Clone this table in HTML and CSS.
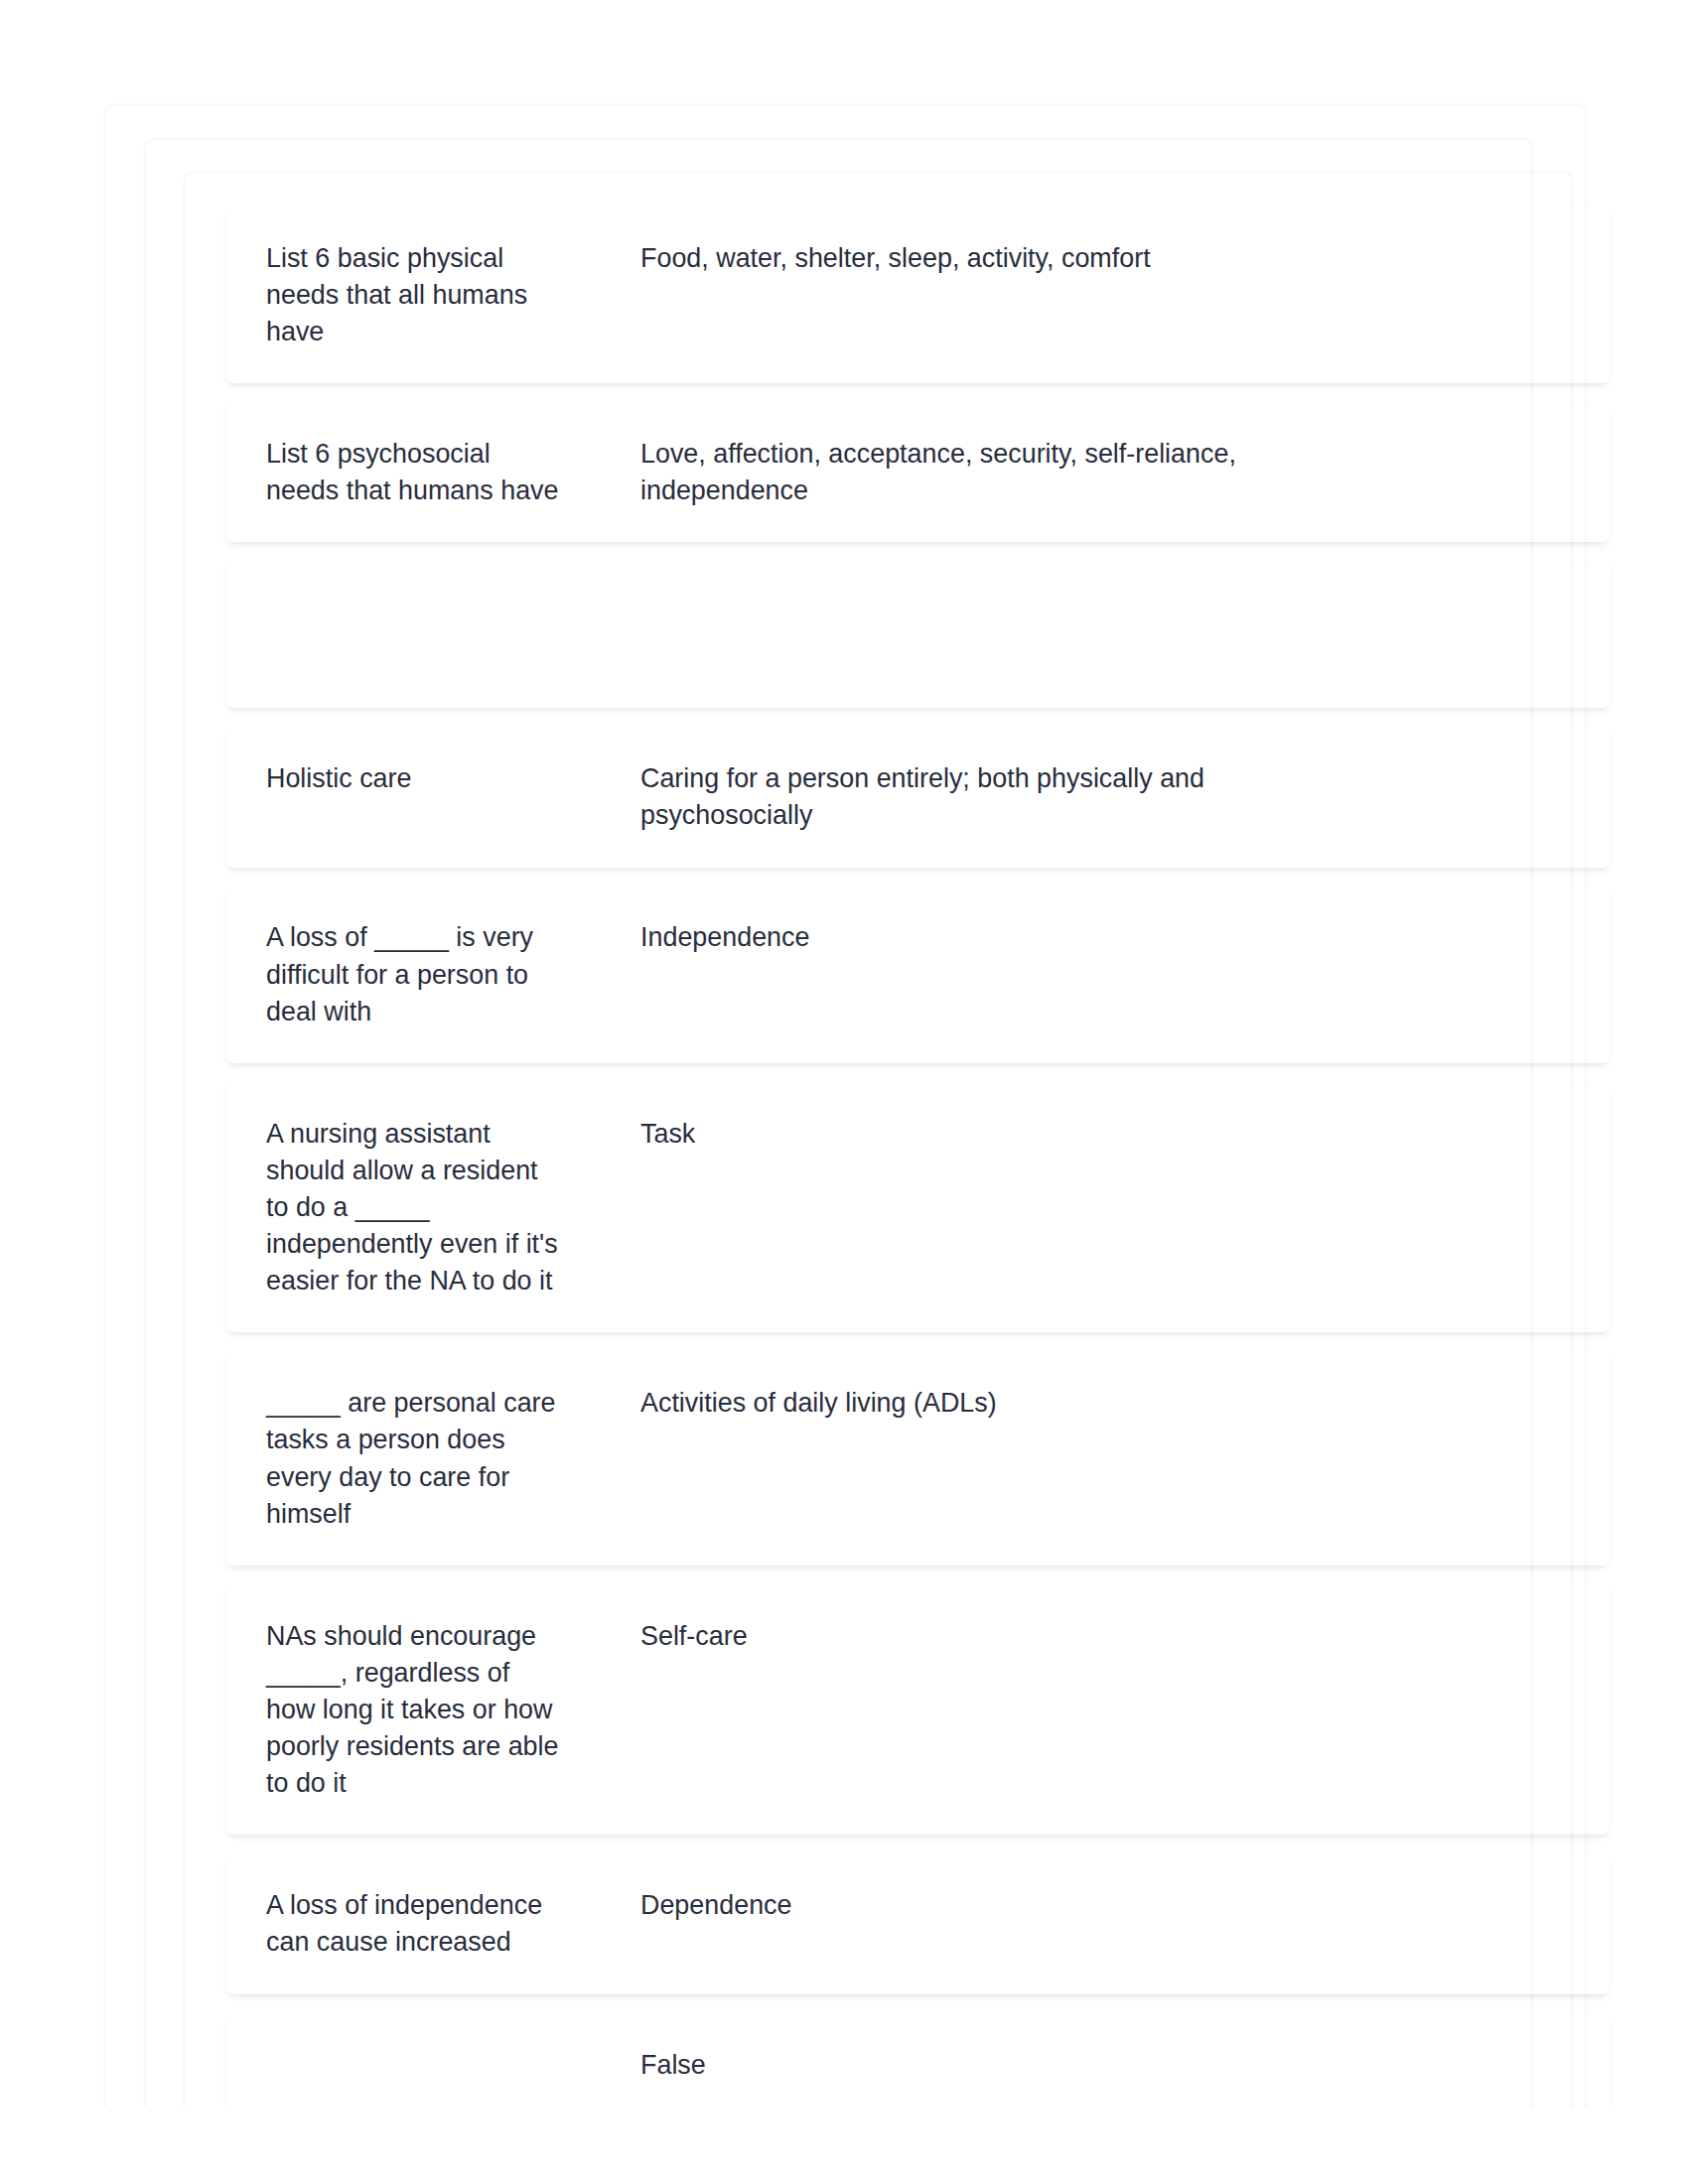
FILE: index.html
```html
<!DOCTYPE html>
<html lang="en">
<head>
<meta charset="utf-8">
<title>Flashcards</title>
<link rel="stylesheet" href="styles.css">
</head>
<body>
<div class="frame">
  <div class="box box-outer">
    <div class="box box-middle">
      <div class="box box-inner">
        <div class="cards">
          <div class="card">
            <div class="term">List 6 basic physical needs that all humans have</div>
            <div class="def">Food, water, shelter, sleep, activity, comfort</div>
          </div>
          <div class="card">
            <div class="term">List 6 psychosocial needs that humans have</div>
            <div class="def">Love, affection, acceptance, security, self-reliance, independence</div>
          </div>
          <div class="card">
            <div class="term"><div class="blank-media"></div></div>
            <div class="def"></div>
          </div>
          <div class="card">
            <div class="term">Holistic care</div>
            <div class="def">Caring for a person entirely; both physically and psychosocially</div>
          </div>
          <div class="card">
            <div class="term">A loss of _____ is very difficult for a person to deal with</div>
            <div class="def">Independence</div>
          </div>
          <div class="card">
            <div class="term">A nursing assistant should allow a resident to do a _____ independently even if it's easier for the NA to do it</div>
            <div class="def">Task</div>
          </div>
          <div class="card">
            <div class="term">_____ are personal care tasks a person does every day to care for himself</div>
            <div class="def">Activities of daily living (ADLs)</div>
          </div>
          <div class="card">
            <div class="term">NAs should encourage _____, regardless of how long it takes or how poorly residents are able to do it</div>
            <div class="def">Self-care</div>
          </div>
          <div class="card">
            <div class="term">A loss of independence can cause increased</div>
            <div class="def">Dependence</div>
          </div>
          <div class="card">
            <div class="term"><div class="blank-media"></div></div>
            <div class="def">False</div>
          </div>
        </div>
      </div>
    </div>
  </div>
</div>
</body>
</html>
```

FILE: styles.css
```css
* {
  box-sizing: border-box;
}

html, body {
  margin: 0;
  padding: 0;
  background: #ffffff;
}

body {
  font-family: "Liberation Sans", Arial, sans-serif;
  color: #282d3d;
}

.frame {
  height: 2122px;
  overflow: hidden;
  padding: 107px 0 0 107px;
}

.box {
  border-radius: 8px;
  background: transparent;
  box-shadow: 0 0 4px rgba(0, 0, 0, 0.1);
}

.box-outer {
  width: 1489px;
  padding: 34px 0 300px 40px;
}

.box-middle {
  width: 1395px;
  padding: 33px 0 300px 40px;
}

.box-inner {
  width: 1395px;
  padding: 33.5px 0 300px 41px;
}

.cards {
  width: 1393px;
  display: flex;
  flex-direction: column;
  gap: 18.9px;
}

.card {
  display: flex;
  align-items: flex-start;
  padding: 34px 39px 33.2px 40px;
  border-radius: 7px;
  background: transparent;
  box-shadow: 0 4px 7px -3px rgba(40, 46, 62, 0.16), 0 0 2px rgba(40, 46, 62, 0.025);
  font-size: 26.9px;
  line-height: 37.1px;
}

.term {
  flex: none;
  width: 298px;
}

.def {
  flex: none;
  width: 720px;
  margin-left: 79px;
}

.blank-media {
  height: 81px;
}
```
